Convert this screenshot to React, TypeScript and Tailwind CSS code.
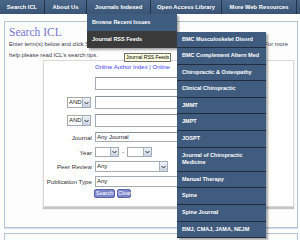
import React from 'react';

// top bar of the ICL site
const NAV_ITEMS = [
  { label: 'Search ICL', w: 'w-[45px]' },
  { label: 'About Us', w: 'w-[42px]' },
  { label: 'Journals Indexed', w: 'w-[64px]' },
  { label: 'Open Access Library', w: 'w-[71px]' },
  { label: 'More Web Resources', w: 'w-[75px]' },
];

const RSS_FEEDS = [
  'BMC Musculoskelet Disord',
  'BMC Complement Altern Med',
  'Chiropractic & Osteopathy',
  'Clinical Chiropractic',
  'JMMT',
  'JMPT',
  'JOSPT',
  'Journal of Chiropractic Medicine',
  'Manual Therapy',
  'Spine',
  'Spine Journal',
  'BMJ, CMAJ, JAMA, NEJM',
];

function Arrow() {
  return (
    <span className="flex h-full w-[8px] shrink-0 items-center justify-center border-l border-[#a7b4c6] bg-gradient-to-b from-[#eef2f7] to-[#c9d3e1]">
      <svg width="5" height="4" viewBox="0 0 5 4">
        <path d="M0.5 1 L2.5 3 L4.5 1" stroke="#333" strokeWidth="1" fill="none" />
      </svg>
    </span>
  );
}

function Select({ value = '', w, h = 'h-[11px]' }: { value?: string; w: string; h?: string }) {
  return (
    <div className={`flex ${w} ${h} items-stretch border border-[#a3abb4] bg-white`}>
      <span className="flex-1 truncate pl-[1px] text-[6px] leading-[9px] text-[#222]">{value}</span>
      <Arrow />
    </div>
  );
}

function TextBox({ value = '', h = 'h-[13px]', w = 'w-[150px]' }: { value?: string; h?: string; w?: string }) {
  return (
    <div className={`${w} ${h} border border-[#a3abb4] border-t-[#8a929b] bg-white pl-[1px] text-[6px] leading-[9px] text-[#223]`}>
      {value}
    </div>
  );
}

function Row({ label, children, className = '' }: { label?: React.ReactNode; children: React.ReactNode; className?: string }) {
  return (
    <div className={`flex items-center ${className}`}>
      <div className="flex w-[48px] justify-end text-[6.2px] text-[#333]">{label}</div>
      <div className="ml-[3px] flex items-center">{children}</div>
    </div>
  );
}

export default function App() {
  return (
    <div className="relative h-[240px] w-[300px] overflow-hidden bg-white font-['Liberation_Sans',Arial,sans-serif]">
      {/* nav */}
      <div className="flex h-[14px] bg-gradient-to-b from-[#4a6688] to-[#3a5576]">
        {NAV_ITEMS.map((item) => (
          <div
            key={item.label}
            className={`${item.w} flex items-center justify-center border-r border-[#22344a] text-[5.8px] font-bold text-white`}
          >
            {item.label}
          </div>
        ))}
      </div>

      {/* main box */}
      <div className="ml-[4px] mr-[2px] mt-[7px] h-[207px] border border-[#b3c4d6] bg-[#fdfdfd] pl-[4px] pr-[3px] pt-[4px] shadow-[0_1px_1px_#d6dee7]">
        <div className="font-['Liberation_Serif',serif] text-[11.5px] leading-[13px] text-[#7676cf]">Search ICL</div>
        <div className="mr-[6px] text-[5.8px] leading-[10.7px] text-[#3a3a4a]">
          <div className="flex justify-between whitespace-nowrap">
            <span>Enter term(s) below and click Search. Use the fields to narrow your results.</span>
            <span>For more</span>
          </div>
          <div>help please read ICL's search tips.</div>
        </div>

        {/* form panel */}
        <div className="ml-[34px] h-[147px] border border-[#dadada] bg-white pt-[2px] shadow-[0_2px_1px_#c4c4c4]">
          <Row>
            <span className="whitespace-nowrap text-[6px] leading-[8px] text-[#3b3bf5]">
              Online Author Index | Online
            </span>
          </Row>
          <Row className="mt-[6px]">
            <TextBox />
          </Row>
          <Row className="mt-[6px]" label={<div className="mr-[1px]"><Select value="AND" w="w-[24px]" /></div>}>
            <TextBox />
          </Row>
          <Row className="mt-[5px]" label={<div className="mr-[1px]"><Select value="AND" w="w-[24px]" /></div>}>
            <TextBox />
          </Row>
          <Row className="mt-[5px]" label="Journal">
            <TextBox value="Any Journal" h="h-[10px]" />
          </Row>
          <Row className="mt-[5px]" label="Year">
            <Select w="w-[24px]" h="h-[10px]" />
            <span className="mx-[3px] text-[6px] text-[#333]">-</span>
            <Select w="w-[25px]" h="h-[10px]" />
          </Row>
          <Row className="mt-[4px]" label="Peer Review">
            <Select value="Any" w="w-[73px]" />
          </Row>
          <Row className="mt-[4px]" label="Publication Type">
            <Select value="Any" w="w-[150px]" />
          </Row>
          <Row className="mt-[2px]">
            <div className="-ml-[1px] flex gap-[2px]">
              <button className="h-[9px] w-[21px] rounded-[2px] border border-[#5b65aa] bg-[#7c87ca] text-[5.5px] leading-[7px] text-white">
                Search
              </button>
              <button className="h-[9px] w-[14px] rounded-[2px] border border-[#5b65aa] bg-[#7c87ca] text-[5.5px] leading-[7px] text-white">
                Clear
              </button>
            </div>
          </Row>
        </div>
      </div>

      {/* next box */}
      <div className="ml-[4px] mr-[2px] mt-[5px] h-[20px] border border-[#b3c4d6] bg-[#fdfdfd]" />

      {/* Journals Indexed dropdown */}
      <div className="absolute left-[87px] top-[14px] w-[90px] shadow-[2px_2px_2px_rgba(0,0,0,0.35)]">
        <div className="flex h-[17px] items-center bg-[#3f5d81] pl-[5px] text-[5.5px] font-bold text-white">
          Browse Recent Issues
        </div>
        <div className="flex h-[17px] items-center bg-[#3b3b3b] pl-[5px] text-[5.5px] font-bold text-white">
          Journal RSS Feeds
        </div>
      </div>

      {/* RSS feeds submenu */}
      <div className="absolute left-[177px] top-[31.5px] w-[89px] shadow-[2px_2px_2px_rgba(0,0,0,0.35)]">
        {RSS_FEEDS.map((name) => (
          <div
            key={name}
            className="border-b border-[#1e2d40] bg-[#3f5b7e] px-[5px] py-[4px] text-[5.5px] font-bold leading-[7.6px] text-white"
          >
            {name}
          </div>
        ))}
      </div>

      {/* tooltip */}
      <div className="absolute left-[124px] top-[53px] border border-[#6f6f6f] bg-[#ffffe1] px-[1px] text-[5px] leading-[7px] text-black">
        Journal RSS Feeds
      </div>
    </div>
  );
}
